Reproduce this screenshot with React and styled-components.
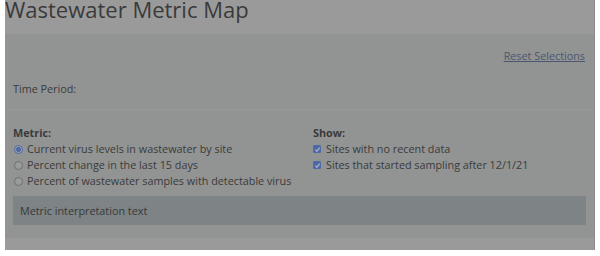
import React from 'react';
import styled, { createGlobalStyle } from 'styled-components';

const GlobalStyle = createGlobalStyle`
  body {
    margin: 0;
    background: #ffffff;
    font-family: "Open Sans", "Liberation Sans", sans-serif;
  }
`;

const metrics = [
  { label: 'Current virus levels in wastewater by site', checked: true },
  { label: 'Percent change in the last 15 days', checked: false },
  { label: 'Percent of wastewater samples with detectable virus', checked: false }
];

const shows = ['Sites with no recent data', 'Sites that started sampling after 12/1/21'];

const App = () => (
  <>
    <GlobalStyle />
    <Page>
      <Header>
        <Title>Wastewater Metric Map</Title>
      </Header>
      <Panel>
        <ResetRow>
          <ResetLink href="#">Reset Selections</ResetLink>
        </ResetRow>
        <Label>Time Period:</Label>
        <Options>
          <Column>
            <GroupTitle>Metric:</GroupTitle>
            {metrics.map(m => (
              <Option key={m.label}>
                <Radio checked={m.checked} />
                {m.label}
              </Option>
            ))}
          </Column>
          <Column>
            <GroupTitle>Show:</GroupTitle>
            {shows.map(s => (
              <Option key={s}>
                <Check>
                  <svg width="7" height="7" viewBox="0 0 8 8">
                    <path d="M1.4 4.2 L3.2 6 L6.6 2" fill="none" stroke="#a7afc4" strokeWidth="1.4" />
                  </svg>
                </Check>
                {s}
              </Option>
            ))}
          </Column>
        </Options>
        <Interpretation>Metric interpretation text</Interpretation>
      </Panel>
      <Footer />
    </Page>
  </>
);

const Page = styled.div`
  margin: 0 5px;
  width: 590px;
  height: 250px;
  background: #9a9a9a;
  border-right: 1px solid #8c8c8c;
  box-sizing: border-box;
  display: flex;
  flex-direction: column;
`;

const Header = styled.div`
  height: 34px;
  box-sizing: border-box;
`;

const Title = styled.h1`
  margin: 0;
  font-size: 22px;
  line-height: 19px;
  font-weight: 400;
  color: #3a3a3a;
`;

const Panel = styled.div`
  background: #929493;
  padding: 14px 8px 13px;
  font-size: 10.8px;
  line-height: 16px;
  color: #3a3b3b;
`;

const ResetRow = styled.div`
  display: flex;
  justify-content: flex-end;
  padding-right: 1px;
  margin-bottom: 17px;
`;

const ResetLink = styled.a`
  color: #4a5672;
  text-decoration: underline;
`;

const Label = styled.div`
  padding-bottom: 12px;
  border-bottom: 1px solid #979998;
  margin: 0 -8px;
  padding-left: 8px;
`;

const Options = styled.div`
  display: grid;
  grid-template-columns: 274px 1fr;
  column-gap: 26px;
  padding-top: 15px;
`;

const Column = styled.div`
  display: flex;
  flex-direction: column;
`;

const GroupTitle = styled.div`
  font-weight: 700;
  color: #3a3a3a;
`;

const Option = styled.div`
  display: flex;
  align-items: center;
  gap: 4px;
  white-space: nowrap;
`;

const Radio = styled.span`
  width: 9px;
  height: 9px;
  box-sizing: border-box;
  border-radius: 50%;
  flex: none;
  margin-left: 1px;
  border: 1px solid ${p => (p.checked ? '#4f6aa5' : '#6f7171')};
  background: ${p =>
    p.checked ? 'radial-gradient(circle, #4f6aa5 0 2.2px, #9aa0ae 2.6px)' : '#9a9c9b'};
`;

const Check = styled.span`
  width: 8px;
  height: 8px;
  border-radius: 1.5px;
  background: #4d69a6;
  flex: none;
  display: flex;
  align-items: center;
  justify-content: center;
  margin-right: 1px;
`;

const Interpretation = styled.div`
  margin-top: 7px;
  background: #7e8385;
  padding: 6.5px 7px;
  color: #373939;
`;

const Footer = styled.div`
  flex: 1;
`;

export default App;
